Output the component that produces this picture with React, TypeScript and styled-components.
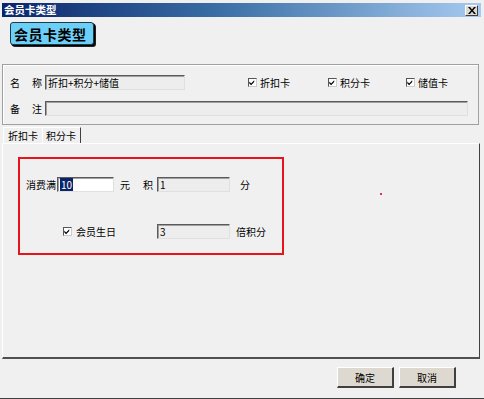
import React from "react";
import styled, { createGlobalStyle } from "styled-components";

const Global = createGlobalStyle`
  html, body {
    margin: 0;
    padding: 0;
    background: #f0f0f0;
  }
  * {
    box-sizing: border-box;
  }
`;

export default function App() {
  return (
    <>
      <Global />
      <Window>
        <TitleBar>
          <TitleText>会员卡类型</TitleText>
          <CloseButton>
            <svg width="8" height="7" viewBox="0 0 8 7">
              <path d="M0 0 L2 0 L4 2.5 L6 0 L8 0 L5 3.5 L8 7 L6 7 L4 4.5 L2 7 L0 7 L3 3.5 Z" fill="#000" />
            </svg>
          </CloseButton>
        </TitleBar>

        <Header>
          <CardLabel>会员卡类型</CardLabel>
        </Header>

        <GroupBox>
          <FieldRow>
            <FieldLabel>
              <span>名</span>
              <span>称</span>
            </FieldLabel>
            <TextBox $width={140}>折扣+积分+储值</TextBox>
            <Check $left={63}>
              <CheckBox />
              折扣卡
            </Check>
            <Check $left={38}>
              <CheckBox />
              积分卡
            </Check>
            <Check $left={36}>
              <CheckBox />
              储值卡
            </Check>
          </FieldRow>
          <FieldRow>
            <FieldLabel>
              <span>备</span>
              <span>注</span>
            </FieldLabel>
            <TextBox $width={423} />
          </FieldRow>
        </GroupBox>

        <TabStrip>
          <Tab>折扣卡</Tab>
          <Tab $active>积分卡</Tab>
        </TabStrip>

        <TabPanel>
          <Highlight>
            <PointsGrid>
              <Label>消费满</Label>
              <TextBox $width={57} $white>
                <Selected>10</Selected>
              </TextBox>
              <Label $pad={6}>元</Label>
              <Label>积</Label>
              <TextBox $width={73}>1</TextBox>
              <Label $pad={10}>分</Label>

              <BirthdayCheck>
                <CheckBox />
                会员生日
              </BirthdayCheck>
              <TextBox $width={73}>3</TextBox>
              <Label $pad={6}>倍积分</Label>
            </PointsGrid>
          </Highlight>
          <Dot />
        </TabPanel>

        <Footer>
          <Button>确定</Button>
          <Button>取消</Button>
        </Footer>
      </Window>
    </>
  );
}

const CheckBox = () => (
  <CheckSquare>
    <svg width="9" height="9" viewBox="0 0 9 9">
      <path d="M1.5 3.5 L3.5 5.5 L7 2 L7 4 L3.5 7.5 L1.5 5.5 Z" fill="#000" />
    </svg>
  </CheckSquare>
);

const Window = styled.div`
  width: 484px;
  height: 399px;
  display: flex;
  flex-direction: column;
  padding: 3px 3px 2px 2px;
  background: #f0f0f0;
  font-family: "Noto Sans CJK SC", "DejaVu Sans", sans-serif;
  font-size: 10px;
  color: #000;
  border-bottom: 1px solid #404040;
`;

const TitleBar = styled.div`
  height: 14px;
  display: flex;
  align-items: center;
  justify-content: space-between;
  padding: 0 3px 0 2px;
  background: linear-gradient(to right, #0a246a 0%, #3a6ea5 45%, #a6caf0 100%);
`;

const TitleText = styled.span`
  color: #fff;
  font-weight: bold;
  font-size: 10.5px;
  line-height: 14px;
`;

const CloseButton = styled.div`
  width: 13px;
  height: 11px;
  display: flex;
  align-items: center;
  justify-content: center;
  background: #dcd9d2;
  border-top: 1px solid #fff;
  border-left: 1px solid #fff;
  border-right: 1px solid #404040;
  border-bottom: 1px solid #404040;
`;

const Header = styled.div`
  height: 47px;
  padding: 5px 0 0 8px;
`;

const CardLabel = styled.div`
  width: 84px;
  height: 23px;
  display: flex;
  align-items: center;
  padding-left: 3px;
  background: #6cd0f6;
  border: 1px solid #1c3a4a;
  border-radius: 3px;
  box-shadow: 1px 1px 0 #000, 2px 2px 0 #202020;
  font-size: 14px;
  font-weight: bold;
  letter-spacing: 0.5px;
`;

const GroupBox = styled.div`
  height: 61px;
  margin-right: 2px;
  display: flex;
  flex-direction: column;
  gap: 10px;
  padding: 9px 0 0 0;
  border: 1px solid #a0a0a0;
  box-shadow: inset 1px 1px 0 #fff;
`;

const FieldRow = styled.div`
  display: flex;
  align-items: center;
  height: 16px;
`;

const FieldLabel = styled.div`
  width: 42px;
  flex-shrink: 0;
  display: flex;
  justify-content: space-between;
  padding: 0 3px 0 7px;
  font-size: 10px;
`;

const TextBox = styled.div<{ $width: number; $white?: boolean }>`
  width: ${(p) => p.$width}px;
  height: 15px;
  flex-shrink: 0;
  display: flex;
  align-items: center;
  padding-left: 2px;
  background: ${(p) => (p.$white ? "#fff" : "#ededed")};
  border-top: 1px solid #5a5a5a;
  border-left: 1px solid #5a5a5a;
  border-right: 1px solid #e0e0e0;
  border-bottom: 1px solid #e0e0e0;
  box-shadow: inset 1px 1px 0 #a0a0a0;
  font-size: 10px;
  line-height: 13px;
  white-space: nowrap;
`;

const Selected = styled.span`
  background: #0a246a;
  color: #fff;
  padding: 0 1px;
`;

const Check = styled.label<{ $left: number }>`
  display: flex;
  align-items: center;
  flex-shrink: 0;
  gap: 3px;
  margin-left: ${(p) => p.$left}px;
  font-size: 10px;
  white-space: nowrap;
`;

const CheckSquare = styled.span`
  width: 9px;
  height: 9px;
  flex-shrink: 0;
  display: inline-flex;
  background: #fff;
  border: 1px solid #555;
  border-right-color: #ccc;
  border-bottom-color: #ccc;
  svg {
    margin: -1px 0 0 -1px;
  }
`;

const TabStrip = styled.div`
  height: 18px;
  display: flex;
  align-items: flex-end;
  padding-left: 1px;
`;

const Tab = styled.div<{ $active?: boolean }>`
  width: 39px;
  height: 16px;
  display: flex;
  align-items: center;
  padding-left: ${(p) => (p.$active ? 3 : 4)}px;
  border-left: 1px solid #fff;
  border-top: 1px solid #fff;
  border-right: ${(p) => (p.$active ? "1px solid #404040" : "none")};
  font-size: 10px;
  white-space: nowrap;
`;

const TabPanel = styled.div`
  flex: 1;
  position: relative;
  padding: 13px 0 0 15px;
  border-top: 1px solid #fff;
  border-left: 1px solid #fff;
  border-right: 1px solid #404040;
  border-bottom: 2px solid #505050;
  margin-right: 1px;
`;

const Highlight = styled.div`
  width: 266px;
  height: 98px;
  border: 2px solid #e8141c;
  padding: 18px 0 0 6px;
`;

const PointsGrid = styled.div`
  display: grid;
  grid-template-columns: 31px 57px 29px 14px 73px auto;
  grid-template-rows: 15px 15px;
  row-gap: 32px;
  align-items: center;
`;

const Label = styled.span<{ $pad?: number }>`
  padding-left: ${(p) => p.$pad ?? 0}px;
  font-size: 10px;
  white-space: nowrap;
`;

const BirthdayCheck = styled.label`
  grid-column: 2 / 5;
  display: flex;
  align-items: center;
  gap: 4px;
  padding-left: 6px;
  font-size: 10px;
  white-space: nowrap;
`;

const Dot = styled.span`
  position: absolute;
  left: 377px;
  top: 49px;
  width: 2px;
  height: 2px;
  background: #e03050;
`;

const Footer = styled.div`
  height: 37px;
  display: flex;
  align-items: center;
  justify-content: flex-end;
  gap: 5px;
  padding: 0 25px 0 0;
`;

const Button = styled.button`
  width: 57px;
  height: 21px;
  padding: 0;
  background: #ddd9d0;
  font-family: inherit;
  font-size: 10px;
  color: #000;
  border-top: 1px solid #fff;
  border-left: 1px solid #fff;
  border-right: 2px solid #404040;
  border-bottom: 2px solid #404040;
`;
